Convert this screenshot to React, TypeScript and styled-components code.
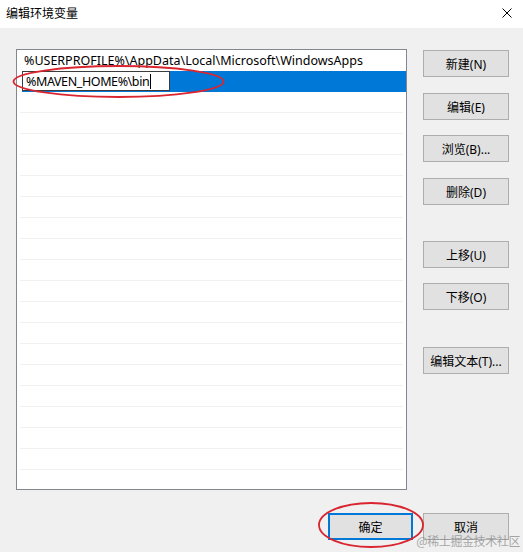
import React from "react";
import styled, { createGlobalStyle } from "styled-components";

const GlobalStyle = createGlobalStyle`
  html, body { margin: 0; padding: 0; background: #f0f0f0; }
  body { font-family: "Noto Sans", "Noto Sans CJK SC", sans-serif; color: #000; }
  * { box-sizing: border-box; }
`;

const Window = styled.div`
  position: relative;
  width: 523px;
  height: 552px;
  background: #f0f0f0;
  display: flex;
  flex-direction: column;
  overflow: hidden;
`;

const TitleBar = styled.div`
  height: 28px;
  flex: none;
  background: #fff;
  display: flex;
  align-items: center;
  justify-content: space-between;
  padding: 0 10px 2px 6px;
`;

const Title = styled.span`
  font-family: "Noto Sans CJK SC", sans-serif;
  font-size: 12px;
  line-height: 16px;
`;

const CloseButton = styled.button`
  width: 12px;
  height: 12px;
  padding: 0;
  border: none;
  background: transparent;
  display: flex;
  align-items: center;
  justify-content: center;
`;

const Body = styled.div`
  display: grid;
  grid-template-columns: 391px 86px;
  column-gap: 16px;
  padding: 21px 14px 0 16px;
`;

const List = styled.div`
  height: 441px;
  border: 1px solid #828790;
  background: #fff;
  overflow: hidden;
  display: flex;
  flex-direction: column;
`;

const Row = styled.div<{ $lined?: boolean }>`
  flex: none;
  height: 21px;
  margin: 0 3px;
  padding-left: 4px;
  border-bottom: 1px solid ${(p) => (p.$lined ? "#f0f0f0" : "transparent")};
  display: flex;
  align-items: center;
  font-size: 12.5px;
  white-space: nowrap;
`;

const EditRow = styled.div`
  flex: none;
  height: 21px;
  margin-left: 5px;
  background: #0078d7;
  display: flex;
  align-items: stretch;
`;

const EditBox = styled.div`
  width: 148px;
  height: 20px;
  background: #fff;
  border: 1px solid #3c3c3c;
  padding-left: 3px;
  display: flex;
  align-items: center;
  font-size: 12.5px;
  letter-spacing: -0.4px;
  white-space: nowrap;
`;

const Caret = styled.span`
  display: inline-block;
  width: 1px;
  height: 15px;
  background: #000;
  margin-left: 1px;
`;

const SideColumn = styled.div`
  display: flex;
  flex-direction: column;
  padding-top: 1px;
`;

const DialogButton = styled.button<{ $mt?: number; $primary?: boolean; $w?: number }>`
  flex: none;
  width: ${(p) => (p.$w ? `${p.$w}px` : "100%")};
  height: 27px;
  margin-top: ${(p) => p.$mt ?? 0}px;
  padding: 0;
  background: #e1e1e1;
  border: ${(p) => (p.$primary ? "2px solid #0078d7" : "1px solid #adadad")};
  font-family: "Noto Sans", "Noto Sans CJK SC", sans-serif;
  font-size: 12px;
  color: #000;
  display: flex;
  align-items: center;
  justify-content: center;
`;

const Footer = styled.div`
  display: flex;
  justify-content: flex-end;
  gap: 10px;
  padding: 23px 14px 0 0;
`;

const Annotations = styled.svg`
  position: absolute;
  left: 0;
  top: 0;
  pointer-events: none;
`;

const Watermark = styled.span`
  position: absolute;
  right: 3px;
  bottom: 3px;
  font-family: "Noto Sans CJK SC", sans-serif;
  font-size: 12px;
  color: rgba(140, 140, 140, 0.75);
  letter-spacing: -0.4px;
`;

const sideButtons: { label: string; mt: number }[] = [
  { label: "新建(N)", mt: 0 },
  { label: "编辑(E)", mt: 16 },
  { label: "浏览(B)...", mt: 15 },
  { label: "删除(D)", mt: 16 },
  { label: "上移(U)", mt: 36 },
  { label: "下移(O)", mt: 15 },
  { label: "编辑文本(T)...", mt: 37 },
];

export default function App() {
  const fillers = Array.from({ length: 19 });
  return (
    <>
      <GlobalStyle />
      <Window>
        <TitleBar>
          <Title>编辑环境变量</Title>
          <CloseButton aria-label="关闭">
            <svg width="10" height="10" viewBox="0 0 10 10">
              <path d="M0.5 0.5 L9.5 9.5 M9.5 0.5 L0.5 9.5" stroke="#000" strokeWidth="1" />
            </svg>
          </CloseButton>
        </TitleBar>
        <Body>
          <List>
            <Row>%USERPROFILE%\AppData\Local\Microsoft\WindowsApps</Row>
            <EditRow>
              <EditBox>
                %MAVEN_HOME%\bin
                <Caret />
              </EditBox>
            </EditRow>
            {fillers.map((_, i) => (
              <Row key={i} $lined />
            ))}
          </List>
          <SideColumn>
            {sideButtons.map((b) => (
              <DialogButton key={b.label} $mt={b.mt}>
                {b.label}
              </DialogButton>
            ))}
          </SideColumn>
        </Body>
        <Footer>
          <DialogButton $primary $w={85}>确定</DialogButton>
          <DialogButton $w={86}>取消</DialogButton>
        </Footer>
        <Annotations width="523" height="552" viewBox="0 0 523 552">
          <ellipse cx="118.5" cy="81.5" rx="105" ry="15.5" fill="none" stroke="#d9252f" strokeWidth="1.8" />
          <ellipse cx="371" cy="525" rx="52" ry="22" fill="none" stroke="#d9252f" strokeWidth="1.8" />
        </Annotations>
        <Watermark>@稀土掘金技术社区</Watermark>
      </Window>
    </>
  );
}
